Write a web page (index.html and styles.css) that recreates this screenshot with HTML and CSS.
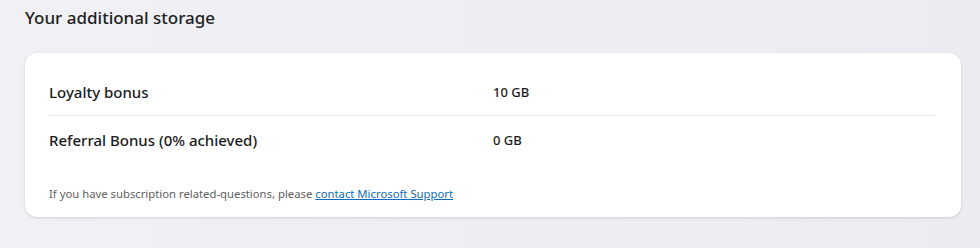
FILE: index.html
```html
<!DOCTYPE html>
<html lang="en">
<head>
    <meta charset="UTF-8">
    <title>Your additional storage</title>
    <link rel="stylesheet" href="styles.css">
</head>
<body>
<div class="page">
    <h2 class="section-title">Your additional storage</h2>
    <div class="card">
        <div class="row">
            <span class="row-label">Loyalty bonus</span>
            <span class="row-value">10 GB</span>
        </div>
        <div class="row">
            <span class="row-label">Referral Bonus (0% achieved)</span>
            <span class="row-value">0 GB</span>
        </div>
        <p class="note">If you have subscription related-questions, please <a href="#">contact Microsoft Support</a></p>
    </div>
</div>
</body>
</html>
```

FILE: styles.css
```css
body {
    margin: 0;
    height: 248px;
    background: linear-gradient(90deg, #f1f0f4 0%, #ebecf1 100%);
    font-family: "Noto Sans", "Open Sans", sans-serif;
    color: #1b1b1b;
}

.page {
    padding: 5px 19px 0 25px;
}

.section-title {
    font-size: 17px;
    font-weight: 500;
    margin: 0 0 23px;
    line-height: 25px;
    color: #1f1f1f;
}

.card {
    background: #fff;
    border-radius: 12px;
    box-shadow: 0 1px 3px rgba(0, 0, 0, 0.12), 0 0 1px rgba(0, 0, 0, 0.08);
    padding: 16px 26px 14px 24px;
}

.row {
    display: flex;
    align-items: center;
    height: 46px;
}

.row + .row {
    border-top: 1px solid #e6e6e6;
    height: 48px;
}

.row-label {
    width: 444px;
    font-size: 15px;
    font-weight: 500;
}

.row-value {
    font-size: 13px;
    font-weight: 500;
}

.note {
    margin: 21px 0 0;
    font-size: 11.3px;
    line-height: 18px;
    color: #5f5f5f;
}

.note a {
    color: #0f6cbd;
}
```
